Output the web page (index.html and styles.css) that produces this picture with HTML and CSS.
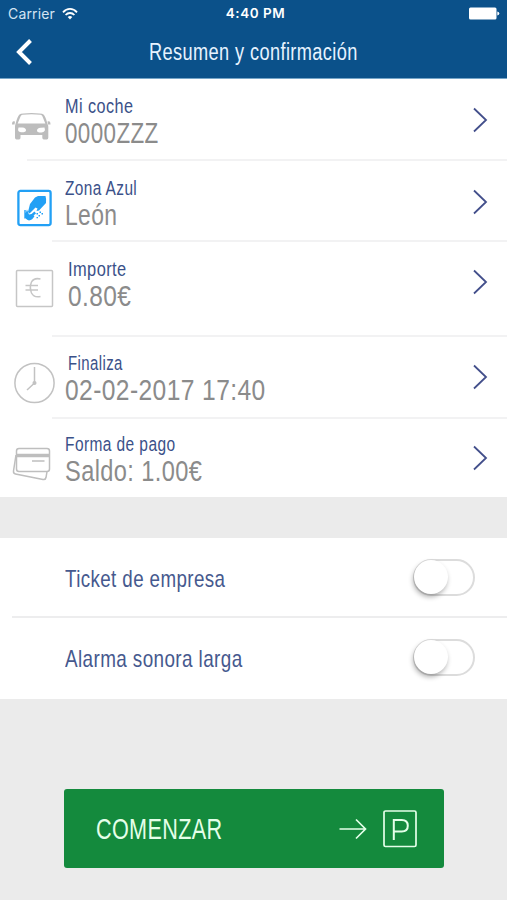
FILE: index.html
```html
<!DOCTYPE html>
<html lang="es">
<head>
<meta charset="utf-8">
<title>Resumen y confirmación</title>
<link rel="stylesheet" href="styles.css">
</head>
<body>
<header class="header">
  <div class="status">
    <div class="carrier"><span>Carrier</span>
      <svg width="16" height="12" viewBox="0 0 16 12" fill="none" stroke="#fff" stroke-width="1.8"><path d="M1 4.3C5-.2 11-.2 15 4.3M3.6 7c2.5-2.7 6.300-2.700 8.800 0"/><path d="M8 11.500 5.700 9.100q2.300-2 4.600 0z" fill="#fff" stroke="none"/></svg>
    </div>
    <span class="time">4:40 PM</span>
    <svg class="battery" width="31" height="13" viewBox="0 0 31 13" fill="#fff"><rect x="0" y=".5" width="27.500" height="12" rx="1.500"/><path d="M28.300 4.500q2 .5 2 2t-2 2z"/></svg>
  </div>
  <nav class="nav">
    <svg class="back" width="18" height="28" viewBox="0 0 18 28" fill="none" stroke="#fff" stroke-width="4"><path d="M15.500 2.500 4 14l11.500 11.500"/></svg>
    <h1 class="title">Resumen y confirmación</h1>
  </nav>
</header>
<main>
  <section class="list">
    <div class="row car">
      <svg class="icon" width="52" height="40" viewBox="0 0 52 40" fill="#bdbdbd"><path fill-rule="evenodd" d="M15.500 21q2-8 4-9.500 2-1.500 12-1.500t12 1.500q2 1.500 4 9.500.8 1 .8 3v10.500q0 2-1.500 2h-3q-1.500 0-1.500-2V32H20.500v2.500q0 2-1.500 2h-2.500q-1.500 0-1.500-2V24q0-2 .5-3zm2.200-.5h27.600l-2.800-7q-.7-1.500-2-1.700-9-1-18 0-1.300.2-2 1.700zM18.500 24.500q-1.500 4.500 2.500 4.700 5 .2 5-2t-3.500-2.700zm26 0-4 .2q-3.500.5-3.500 2.700t4.500 2q4.500-.2 3-4.900z"/><path d="M15 18.500q-3-1.500-3 3h2.500zM47.500 18.500q3-1.500 3 3H48z"/></svg>
      <div class="text"><span class="label">Mi coche</span><span class="value">0000ZZZ</span></div>
      <svg class="chevron" width="16" height="26" viewBox="0 0 16 26"><path d="m2 1.500 12 11.500L2 24.500"/></svg>
    </div>
    <div class="row zone">
      <svg class="icon" width="52" height="40" viewBox="0 0 52 40" fill="#22a0f5"><rect x="18.400" y="2.900" width="32.200" height="34.200" rx="2" fill="none" stroke="#22a0f5" stroke-width="2.300"/><path d="m35 9.500 3-1.500h7.500q1 3 .5 7l-7 7.500-2.500.5 1-2.500-2-1-6 6-1.500-1.500 2-8z"/><path d="m27 21.500 2 5 2.500-.5 3-2.500 1.500 2-2.500 2 1 .5q-2 4-5.500 4.500-4-1-4-5.500zM24.300 22h1.400v8.500h-1.400z"/><path d="M36.500 25H38v1.500h-1.500zm3-1.500H41V25h-1.500zm-1 3.500H40v1.500h-1.500zm3-2H43v1.500h-1.500zm-5 4H38v1.200h-1.500z"/></svg>
      <div class="text"><span class="label">Zona Azul</span><span class="value">León</span></div>
      <svg class="chevron" width="16" height="26" viewBox="0 0 16 26"><path d="m2 1.500 12 11.500L2 24.500"/></svg>
    </div>
    <div class="row amount">
      <svg class="icon" width="54" height="40" viewBox="0 0 54 40" fill="none" stroke="#c6c6c6" stroke-width="1.500"><rect x="16.500" y="2.500" width="36" height="36" rx="1"/><path d="M40.500 11q-6.500-1.500-9 3-2.300 5.500 0 11 2.500 5 9 3.500M25.500 17.500H38M25.500 22H38"/></svg>
      <div class="text"><span class="label">Importe</span><span class="value">0.80€</span></div>
      <svg class="chevron" width="16" height="26" viewBox="0 0 16 26"><path d="m2 1.500 12 11.500L2 24.500"/></svg>
    </div>
    <div class="row ends">
      <svg class="icon" width="56" height="42" viewBox="0 0 56 42" fill="none" stroke="#c2c2c2" stroke-width="1.500"><circle cx="34.500" cy="21" r="19.600"/><path d="M34.500 5v15M34 21.500l-7 6.500"/><circle cx="34.500" cy="21" r="1.300" fill="#c2c2c2"/></svg>
      <div class="text"><span class="label">Finaliza</span><span class="value">02-02-2017 17:40</span></div>
      <svg class="chevron" width="16" height="26" viewBox="0 0 16 26"><path d="m2 1.500 12 11.500L2 24.500"/></svg>
    </div>
    <div class="row payment">
      <svg class="icon" width="52" height="40" viewBox="0 0 52 40" fill="none" stroke="#bebebe" stroke-width="1.500"><rect x="16.500" y="4.500" width="33" height="23" rx="2.500"/><path d="M16.500 11.500h33" stroke-width="3.500"/><path d="M32 17h12.500M16 11l-2.500 16q-.3 2.500 2 3l27.500 5.500q2.500.5 3-2l1-6"/></svg>
      <div class="text"><span class="label">Forma de pago</span><span class="value">Saldo: 1.00€</span></div>
      <svg class="chevron" width="16" height="26" viewBox="0 0 16 26"><path d="m2 1.500 12 11.500L2 24.500"/></svg>
    </div>
  </section>
  <section class="options">
    <div class="option"><span class="option-label company">Ticket de empresa</span><span class="toggle"><span class="knob"></span></span></div>
    <div class="option"><span class="option-label alarm">Alarma sonora larga</span><span class="toggle"><span class="knob"></span></span></div>
  </section>
  <button class="start">
    <span class="start-label">COMENZAR</span>
    <svg width="80" height="40" viewBox="0 0 80 40" fill="none" stroke="#e4ffe9" stroke-width="1.700"><path d="M.5 20h25.500M17 10.500l9.500 9.500-9.500 9.500"/><rect x="45" y="2" width="32" height="35.500" rx="1.500"/><path d="M54.800 31V11h8q6 0 6 5.700t-6 5.700h-8" stroke-width="2"/></svg>
  </button>
</main>
</body>
</html>
```

FILE: styles.css
```css
* { box-sizing: border-box; }
body {
  margin: 0;
  width: 507px;
  height: 900px;
  overflow: hidden;
  background: #ebebeb;
  font-family: "Liberation Sans", Arial, sans-serif;
}
.header {
  height: 79px;
  background: #0b518a;
  border-bottom: 1px solid #76a5c8;
  color: #fff;
}
.status {
  display: grid;
  grid-template-columns: 1fr auto 1fr;
  align-items: center;
  height: 27px;
  padding: 0 7px 0 8px;
  font: 14px/27px Inter, sans-serif;
}
.carrier { display: flex; align-items: center; gap: 7px; color: #d3e4f3; }
.carrier span { letter-spacing: .15px; }
.time { margin-left: 3px; font-size: 13.5px; font-weight: 600; letter-spacing: .5px; }
.battery { justify-self: end; }
.nav {
  display: grid;
  grid-template-columns: 149px 1fr;
  align-items: center;
  height: 51px;
}
.back { margin: -1px 0 0 15px; }
.title {
  margin: -2px 0 0;
  width: max-content;
  font-size: 23.3px;
  font-weight: 400;
  line-height: 28px;
  letter-spacing: .5px;
  color: #e7f3ff;
  transform: scaleX(.781);
  transform-origin: left;
}
.list, .options { background: #fff; }
.row {
  display: grid;
  grid-template-columns: 65px 1fr 50px;
  align-items: start;
  height: 82px;
  padding-top: 15px;
  background: linear-gradient(#f2f2f3, #f2f2f3) 52px 100% / 100% 2px no-repeat;
}
.icon { display: block; }
.text { display: flex; flex-direction: column; align-items: flex-start; }
.label, .value { white-space: nowrap; transform-origin: left; letter-spacing: .5px; }
.label { margin-top: 1px; font-size: 19.3px; line-height: 24px; color: #3b5189; }
.value { margin-top: -2px; font-size: 29.5px; line-height: 32px; color: #8b8b8b; }
.chevron {
  margin: 13px 0 0 15px;
  fill: none;
  stroke: #434f8b;
  stroke-width: 1.8;
}
.car { background-position: 27px 100%; }
.car .icon { margin-top: 9px; }
.car .label { transform: scaleX(.842); }
.car .value { transform: scaleX(.76); }
.zone { height: 81px; }
.zone .icon { margin-top: 12px; }
.zone .label { transform: scaleX(.8); }
.zone .value { transform: scaleX(.776); }
.amount { height: 95px; }
.amount .icon { margin-top: 11px; }
.amount .label { margin-left: 3px; transform: scaleX(.852); }
.amount .value { margin-left: 3px; transform: scaleX(.83); }
.amount .chevron { margin-top: 12px; }
.ends { padding-top: 14px; }
.ends .icon { margin-top: 11px; }
.ends .label { margin-left: 3px; transform: scaleX(.777); }
.ends .value { transform: scaleX(.833); }
.payment { height: 78px; padding-top: 13px; background: none; }
.payment .icon { margin-top: 12px; }
.payment .label { transform: scaleX(.805); }
.payment .value { transform: scaleX(.8); }
.options { margin-top: 41px; }
.option {
  display: flex;
  align-items: center;
  justify-content: space-between;
  height: 81px;
  padding: 0 32px 2px 65px;
}
.option:first-child {
  height: 80px;
  background: linear-gradient(#ededee, #ededee) 12px 100% / 100% 2px no-repeat;
}
.option-label {
  margin-top: 3px;
  font-size: 24px;
  line-height: 30px;
  letter-spacing: .5px;
  color: #46598e;
  white-space: nowrap;
  transform-origin: left;
}
.company { transform: scaleX(.782); }
.alarm { transform: scaleX(.787); }
.toggle {
  width: 62px;
  height: 37px;
  border: 2px solid #dcdcdc;
  border-radius: 19px;
}
.knob {
  display: block;
  width: 34px;
  height: 34px;
  margin: -1px;
  border-radius: 50%;
  background: #fff;
  box-shadow: -1px 3px 5px rgba(0, 0, 0, .3);
}
.start {
  display: flex;
  align-items: center;
  justify-content: space-between;
  width: 380px;
  height: 79px;
  margin: 90px 0 0 64px;
  padding: 0 25px 0 32px;
  border: 0;
  border-radius: 3px;
  background: #148a3d;
  font-family: inherit;
}
.start-label {
  font-size: 29.5px;
  line-height: 34px;
  letter-spacing: .5px;
  color: #e4ffe9;
  transform: scaleX(.732);
  transform-origin: left;
}
```
